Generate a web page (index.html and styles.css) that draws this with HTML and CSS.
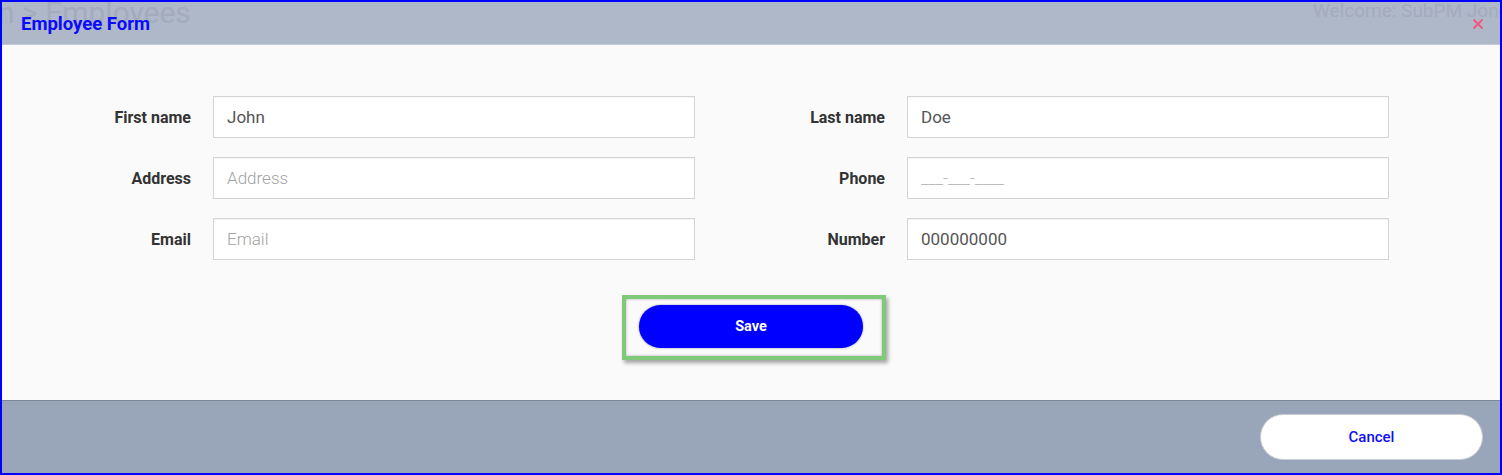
FILE: index.html
```html
<!DOCTYPE html>
<html lang="en">
<head>
    <meta charset="UTF-8">
    <meta name="viewport" content="width=device-width, initial-scale=1.0">
    <title>Employee Form</title>
    <link rel="stylesheet" href="styles.css">
</head>
<body>

<div class="modal">
    <header class="modal-header">
        <span class="backdrop-crumb">n &gt; Employees</span>
        <span class="backdrop-welcome">Welcome: SubPM Jones</span>
        <h1>Employee Form</h1>
        <button class="close-button" aria-label="Close">
            <svg width="12" height="12" viewBox="0 0 12 12">
                <path d="M1.5 1.5 L10.5 10.5 M10.5 1.5 L1.5 10.5" stroke="#f2557e" stroke-width="1.8" fill="none"/>
            </svg>
        </button>
    </header>

    <main class="modal-body">
        <form class="form-grid">
            <div class="field">
                <label for="first-name">First name</label>
                <input id="first-name" type="text" value="John">
            </div>
            <div class="field">
                <label for="last-name">Last name</label>
                <input id="last-name" type="text" value="Doe">
            </div>
            <div class="field">
                <label for="address">Address</label>
                <input id="address" type="text" placeholder="Address">
            </div>
            <div class="field">
                <label for="phone">Phone</label>
                <input id="phone" type="text" class="masked" value="___-___-____">
            </div>
            <div class="field">
                <label for="email">Email</label>
                <input id="email" type="text" placeholder="Email">
            </div>
            <div class="field">
                <label for="number">Number</label>
                <input id="number" type="text" value="000000000">
            </div>
        </form>

        <div class="save-row">
            <div class="save-wrap">
                <span class="highlight"></span>
                <button class="save-button">Save</button>
            </div>
        </div>
    </main>

    <footer class="modal-footer">
        <button class="cancel-button">Cancel</button>
    </footer>
</div>

</body>
</html>
```

FILE: styles.css
```css
* {
    box-sizing: border-box;
}

body {
    margin: 0;
    font-family: 'Roboto', sans-serif;
    background-color: #fafafa;
}

.modal {
    width: 1502px;
    height: 475px;
    border: 2px solid #0000ff;
    display: flex;
    flex-direction: column;
    overflow: hidden;
}

.modal-header {
    position: relative;
    height: 43px;
    background-color: #afb8c9;
    border-bottom: 1px solid #c3c9d4;
    display: flex;
    align-items: center;
    justify-content: space-between;
    padding: 0 16px 0 19px;
    overflow: hidden;
}

.backdrop-crumb {
    position: absolute;
    left: -4px;
    top: -7px;
    font-size: 30px;
    color: #a3abbc;
    white-space: nowrap;
}

.backdrop-welcome {
    position: absolute;
    left: 1311px;
    top: -3px;
    font-size: 19px;
    color: #a3abbc;
    white-space: nowrap;
}

.modal-header h1 {
    position: relative;
    margin: 1px 0 0;
    font-size: 18.5px;
    font-weight: bold;
    color: #0a0aff;
}

.close-button {
    position: relative;
    background: none;
    border: none;
    padding: 0;
    margin-top: 2px;
    width: 12px;
    height: 12px;
    display: flex;
}

.modal-body {
    flex: 1;
    background-color: #fafafa;
    padding: 51px 0 0 39px;
}

.form-grid {
    display: grid;
    grid-template-columns: 654px 654px;
    column-gap: 40px;
    row-gap: 19px;
}

.field {
    display: grid;
    grid-template-columns: 150px 482px;
    column-gap: 22px;
    align-items: center;
}

.field label {
    text-align: right;
    font-size: 16px;
    font-weight: bold;
    color: #333;
}

.field input {
    height: 42px;
    border: 1px solid #d4d4d4;
    box-shadow: inset 0 1px 1px rgba(0, 0, 0, 0.04);
    background-color: #fff;
    padding: 0 13px;
    font-family: 'Roboto', sans-serif;
    font-size: 17px;
    color: #555;
}

.field input::placeholder {
    color: #a2a2a2;
    font-weight: 300;
}

.field input.masked {
    color: #b5b5b5;
    font-weight: 300;
}

.save-row {
    display: flex;
    justify-content: center;
    margin-top: 45px;
    padding-right: 39px;
}

.save-wrap {
    position: relative;
}

.highlight {
    position: absolute;
    left: -17px;
    right: -23px;
    top: -10px;
    bottom: -12px;
    border: 4px solid #80c97a;
    box-shadow: 2px 3px 4px rgba(0, 0, 0, 0.35), inset 0 0 3px rgba(0, 0, 0, 0.3);
}

.save-button {
    position: relative;
    display: block;
    width: 224px;
    height: 43px;
    border: none;
    border-radius: 22px;
    background-color: #0000ff;
    color: #fff;
    font-family: 'Roboto', sans-serif;
    font-size: 14.5px;
    font-weight: bold;
    box-shadow: 0 0 2px rgba(0, 0, 80, 0.5);
}

.modal-footer {
    height: 73px;
    background-color: #99a5b8;
    border-top: 1px solid #7f8898;
    display: flex;
    justify-content: flex-end;
    align-items: flex-start;
    padding: 13px 17px 0 0;
}

.cancel-button {
    width: 223px;
    height: 46px;
    border: 1px solid #c8ccd4;
    border-radius: 23px;
    background-color: #fff;
    color: #1010f5;
    font-family: 'Roboto', sans-serif;
    font-size: 15px;
    font-weight: 500;
}
```
